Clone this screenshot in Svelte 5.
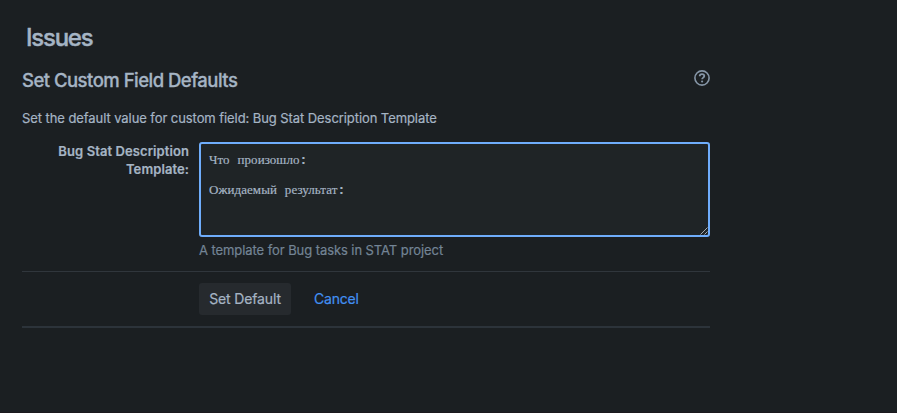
<script>
  let lines = [['Что', 'произошло'], [], ['Ожидаемый', 'результат']];
</script>

<main class="page">
  <h1>Issues</h1>
  <form class="panel" onsubmit={(e) => e.preventDefault()}>
    <header>
      <h2>Set Custom Field Defaults</h2>
      <svg class="help" width="16" height="16" viewBox="0 0 16 16" fill="none" stroke="#8696a7" aria-label="Help">
        <circle cx="8" cy="8" r="7.1" stroke-width="1.6" />
        <path d="M5.7 6.3C5.7 4.9 6.6 4.1 8 4.1s2.3.8 2.3 2c0 1.5-2.2 1.6-2.2 3.2" stroke-width="1.8" />
        <circle cx="8.1" cy="11.5" r="1.1" fill="#8696a7" stroke="none" />
      </svg>
    </header>
    <p class="intro">Set the default value for custom field: Bug Stat Description Template</p>
    <div class="field">
      <div class="label" id="template-label">Bug Stat Description<br />Template:</div>
      <div class="control">
        <div class="textarea" role="textbox" aria-multiline="true" aria-labelledby="template-label" tabindex="0">
          {#each lines as words}
            <div class="line">{#each words as word, i}{#if i > 0}<span class="mono">&nbsp;</span>{/if}{word}{/each}{#if words.length}<span class="mono colon">:</span>{/if}</div>
          {/each}
          <svg class="grip" width="8" height="8" viewBox="0 0 8 8" stroke="#b5b9bd" stroke-width="0.9" aria-hidden="true">
            <path d="M.5 7.5l7-7M4.5 7.5l3-3" />
          </svg>
        </div>
        <div class="description">A template for Bug tasks in STAT project</div>
      </div>
    </div>
    <footer>
      <button type="submit">Set Default</button>
      <a href="#cancel">Cancel</a>
    </footer>
  </form>
</main>

<style>
  :global(body) { background: #1b1f22; }
  .page {
    box-sizing: border-box;
    height: 413px;
    padding: 24px 0 0 22px;
    border-bottom: 1px solid #1b191d;
    color: #a5b4c4;
    background: #1b1f22;
    font: 13px/18px Inter, sans-serif;
    -webkit-text-stroke: 0.2px currentColor;
  }
  h1, h2, p { margin: 0; }
  h1 { padding-left: 4px; font-size: 24px; line-height: 28px; font-weight: 500; letter-spacing: -1.25px; -webkit-text-stroke: 0.4px currentColor; }
  .panel { width: 688px; margin-top: 16px; }
  header { display: flex; justify-content: space-between; height: 24px; }
  h2 { font-size: 18.5px; line-height: 24px; font-weight: 500; letter-spacing: -0.52px; white-space: nowrap; -webkit-text-stroke: 0.3px currentColor; }
  .help { margin-top: 2px; }
  .intro { margin-top: 17px; letter-spacing: -0.075px; white-space: nowrap; }
  .field { display: flex; gap: 10px; margin-top: 15px; }
  .label { width: 167px; text-align: right; font-weight: 600; letter-spacing: 0.09px; white-space: nowrap; }
  .control { width: 511px; }
  .textarea {
    position: relative;
    box-sizing: border-box;
    height: 95px;
    padding: 8px;
    border: 2px solid #6fadfb;
    border-radius: 3px;
    background: #1f2426;
    outline: none;
    font: 13px/15px "Liberation Serif", serif;
    letter-spacing: 0.06px;
    white-space: nowrap;
  }
  .line { height: 15px; }
  .mono { font-family: "Liberation Mono", monospace; }
  .colon { font-weight: 700; }
  .grip { position: absolute; right: 0; bottom: 0; }
  .description { margin-top: 4px; color: #738495; letter-spacing: -0.075px; white-space: nowrap; }
  footer {
    display: flex;
    align-items: center;
    box-sizing: border-box;
    height: 57px;
    margin-top: 12px;
    padding-left: 177px;
    border-top: 1px solid #30363c;
    border-bottom: 2px solid #2c333a;
  }
  button {
    width: 92px;
    height: 32px;
    padding: 0;
    border: 0;
    border-radius: 3px;
    color: #a5b4c4;
    background: #262a2e;
    font: 14px/20px Inter, sans-serif;
    letter-spacing: -0.14px;
    -webkit-text-stroke: 0.2px currentColor;
  }
  a { margin-left: 23px; color: #4290f2; font-size: 14px; line-height: 20px; letter-spacing: -0.2px; text-decoration: none; -webkit-text-stroke: 0.2px currentColor; }
</style>
